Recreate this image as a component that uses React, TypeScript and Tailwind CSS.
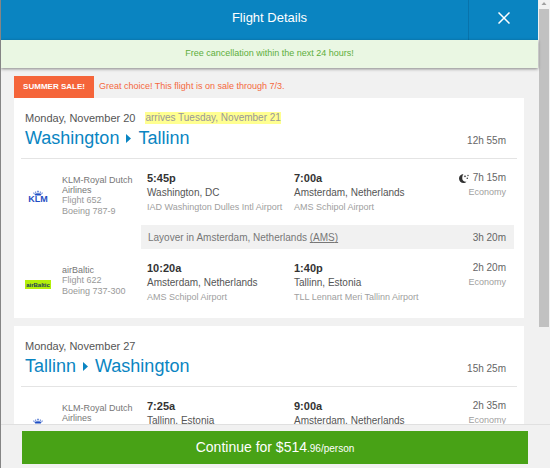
import React from 'react';

interface Segment {
  airline: string;
  logo: 'klm' | 'airbaltic';
  flight: string;
  plane: string;
  departTime: string;
  departCity: string;
  departAirport: string;
  arriveTime: string;
  arriveCity: string;
  arriveAirport: string;
  duration: string;
  cabin: string;
  overnight?: boolean;
  layover?: { city: string; code: string; duration: string };
}

interface Trip {
  date: string;
  arrives?: string;
  from: string;
  to: string;
  duration: string;
  segments: Segment[];
}

const trips: Trip[] = [
  {
    date: 'Monday, November 20',
    arrives: 'arrives Tuesday, November 21',
    from: 'Washington',
    to: 'Tallinn',
    duration: '12h 55m',
    segments: [
      {
        airline: 'KLM-Royal Dutch Airlines',
        logo: 'klm',
        flight: 'Flight 652',
        plane: 'Boeing 787-9',
        departTime: '5:45p',
        departCity: 'Washington, DC',
        departAirport: 'IAD Washington Dulles Intl Airport',
        arriveTime: '7:00a',
        arriveCity: 'Amsterdam, Netherlands',
        arriveAirport: 'AMS Schipol Airport',
        duration: '7h 15m',
        cabin: 'Economy',
        overnight: true,
        layover: { city: 'Amsterdam, Netherlands', code: 'AMS', duration: '3h 20m' }
      },
      {
        airline: 'airBaltic',
        logo: 'airbaltic',
        flight: 'Flight 622',
        plane: 'Boeing 737-300',
        departTime: '10:20a',
        departCity: 'Amsterdam, Netherlands',
        departAirport: 'AMS Schipol Airport',
        arriveTime: '1:40p',
        arriveCity: 'Tallinn, Estonia',
        arriveAirport: 'TLL Lennart Meri Tallinn Airport',
        duration: '2h 20m',
        cabin: 'Economy'
      }
    ]
  },
  {
    date: 'Monday, November 27',
    from: 'Tallinn',
    to: 'Washington',
    duration: '15h 25m',
    segments: [
      {
        airline: 'KLM-Royal Dutch Airlines',
        logo: 'klm',
        flight: '',
        plane: '',
        departTime: '7:25a',
        departCity: 'Tallinn, Estonia',
        departAirport: '',
        arriveTime: '9:00a',
        arriveCity: 'Amsterdam, Netherlands',
        arriveAirport: '',
        duration: '2h 35m',
        cabin: 'Economy'
      }
    ]
  }
];

const KlmLogo = () => (
  <div className="flex w-[26px] flex-col items-center text-[#1f4fc4]">
    <svg viewBox="0 0 20 12" className="h-[6px] w-[10px]" fill="currentColor">
      <path d="M9.4 1 H10.6 V2.2 H11.8 V3.2 H10.6 V5 H9.4 V3.2 H8.2 V2.2 H9.4 Z" />
      <circle cx="1.6" cy="6" r="1.2" />
      <circle cx="5.4" cy="4.2" r="1.2" />
      <circle cx="14.6" cy="4.2" r="1.2" />
      <circle cx="18.4" cy="6" r="1.2" />
      <path d="M2 6.5 L5 8.6 L5.6 5 L8 8 L10 5 L12 8 L14.4 5 L15 8.6 L18 6.5 L15.5 11 H4.5 Z" />
    </svg>
    <span className="text-[9px] leading-[7px] font-bold">KLM</span>
  </div>
);

const AirBalticLogo = () => (
  <div className="flex h-[9px] w-[26px] items-center justify-center bg-[#b4f00a] text-[6px] leading-none font-bold text-[#1d3a5a]">
    airBaltic
  </div>
);

const MoonIcon = () => (
  <svg viewBox="0 0 20 18" className="h-[9px] w-[10px]" fill="#333">
    <path d="M9 0 C3.5 0.5 0 4 0 9 C0 14 4 18 9 18 C11.5 18 13.5 17 15 15.5 C10 16 6.5 13 6.5 8.5 C6.5 5 7.5 2 9 0 Z" />
    <path d="M12 2 l.8 1.7 1.7.8 -1.7.8 -.8 1.7 -.8-1.7 -1.7-.8 1.7-.8Z" />
    <circle cx="18" cy="3" r="1.3" />
    <circle cx="16.5" cy="8.5" r="1.5" />
  </svg>
);

const SegmentRow: React.FC<{ segment: Segment }> = ({ segment }) => (
  <>
    <div className="grid grid-cols-[37px_85px_1fr_1fr_65px] pt-[11px] pr-[11px] pb-2 pl-1">
      <div className="flex items-center pt-[5px]">
        {segment.logo === 'klm' ? <KlmLogo /> : <AirBalticLogo />}
      </div>
      <div className="self-start pt-[5px] pr-2 text-[9px] leading-[11px] text-[#999]">
        <p className="leading-[10px] text-[#777]">{segment.airline}</p>
        <p className="min-h-[11px]">{segment.flight}</p>
        <p className="min-h-[11px]">{segment.plane}</p>
      </div>
      <div className="whitespace-nowrap">
        <p className="text-[11px] leading-4 font-bold text-[#333]">{segment.departTime}</p>
        <p className="text-[10px] leading-[14px] text-[#555]">{segment.departCity}</p>
        <p className="text-[9px] leading-[14px] text-[#a0a0a0]">{segment.departAirport}</p>
      </div>
      <div className="whitespace-nowrap">
        <p className="text-[11px] leading-4 font-bold text-[#333]">{segment.arriveTime}</p>
        <p className="text-[10px] leading-[14px] text-[#555]">{segment.arriveCity}</p>
        <p className="text-[9px] leading-[14px] text-[#a0a0a0]">{segment.arriveAirport}</p>
      </div>
      <div className="text-right whitespace-nowrap">
        <p className="flex items-center justify-end gap-1 text-[10px] leading-4 text-[#666]">
          {segment.overnight && <MoonIcon />}
          {segment.duration}
        </p>
        <p className="text-[9px] leading-3 text-[#a0a0a0]">{segment.cabin}</p>
      </div>
    </div>
    {segment.layover && (
      <div className="mr-[3px] ml-[120px] flex h-6 items-center justify-between bg-[#f1f1f1] pr-2 pl-[7px] text-[10px] text-[#777]">
        <span>
          Layover in {segment.layover.city}{' '}
          <abbr className="underline [text-decoration-skip-ink:none]">({segment.layover.code})</abbr>
        </span>
        <span className="text-[#666]">{segment.layover.duration}</span>
      </div>
    )}
  </>
);

const TripCard: React.FC<{ trip: Trip }> = ({ trip }) => (
  <section className="bg-white px-[7px] pt-3 pb-[6px]">
    <div className="flex items-end justify-between border-b border-[#e4e4e4] pr-[11px] pb-2 pl-1">
      <div>
        <p className="flex items-center gap-[10px] text-[11px] leading-4 text-[#555]">
          {trip.date}
          {trip.arrives && (
            <mark className="bg-[#ffff90] text-[10px] leading-3 text-[#999]">{trip.arrives}</mark>
          )}
        </p>
        <h2 className="flex items-center gap-[7px] text-[18px] leading-6 text-[#0a85c2]">
          {trip.from}
          <svg viewBox="0 0 5 9" className="h-[9px] w-[5px]" fill="currentColor">
            <path d="M0 0 L5 4.5 L0 9 Z" />
          </svg>
          {trip.to}
        </h2>
      </div>
      <p className="text-[10px] leading-[18px] text-[#666]">{trip.duration}</p>
    </div>
    {trip.segments.map((segment) => (
      <SegmentRow key={segment.departTime} segment={segment} />
    ))}
  </section>
);

const App = () => {
  return (
    <div className="flex h-screen flex-col overflow-hidden border-l border-[#858585] bg-[#f1f1f1] font-['Liberation_Sans',Arial,sans-serif]">
      <div className="flex min-h-0 flex-1">
        <div className="flex min-w-0 flex-1 flex-col">
          <header className="flex h-10 shrink-0 items-stretch bg-[#0a84c1] text-white">
            <div className="w-[70px]" />
            <h1 className="flex flex-1 items-center justify-center pb-1 text-[13px]">Flight Details</h1>
            <button
              type="button"
              aria-label="Close"
              className="flex w-[70px] items-center justify-center border-l border-[#0873ab] pb-1"
            >
              <svg viewBox="0 0 12 12" className="h-3 w-3" stroke="currentColor" strokeWidth="1.5">
                <path d="M0.5 0.5 L11.5 11.5 M11.5 0.5 L0.5 11.5" />
              </svg>
            </button>
          </header>
          <div className="z-10 flex h-7 shrink-0 items-center justify-center bg-[#eaf7e3] text-[9px] text-[#5eae3c] shadow-[0_1px_3px_rgba(0,0,0,0.45)]">
            Free cancellation within the next 24 hours!
          </div>
          <main className="min-h-0 flex-1 overflow-hidden pt-2 pr-[14px] pl-[13px]">
            <div className="flex h-[22px] items-center gap-[5px] text-[9px] text-[#f4683e]">
              <span className="flex h-full w-20 items-center justify-center bg-[#f5653a] text-[8px] font-bold text-white">
                SUMMER SALE!
              </span>
              Great choice! This flight is on sale through 7/3.
            </div>
            <div className="flex flex-col gap-2">
              {trips.map((trip) => (
                <TripCard key={trip.date} trip={trip} />
              ))}
            </div>
          </main>
        </div>
        {/* Scrollbar */}
        <div className="flex w-3 flex-col items-center bg-[#f1f1f1]">
          <svg viewBox="0 0 6 9" className="h-[9px] w-[6px]" fill="#a0a0a0">
            <path d="M0.5 5 L3 2 L5.5 5 Z" />
          </svg>
          <div className="h-3/4 w-[10px] bg-[#c1c1c1]" />
        </div>
      </div>
      <footer className="shrink-0 border-t border-[#e0e0e0] bg-[#f1f1f1] pt-[6px] pr-[22px] pb-1 pl-[21px]">
        <button type="button" className="h-[33px] w-full bg-[#48a216] text-[14px] text-white">
          Continue for $514<span className="text-[10px]">.96/person</span>
        </button>
      </footer>
    </div>
  );
};

export default App;
